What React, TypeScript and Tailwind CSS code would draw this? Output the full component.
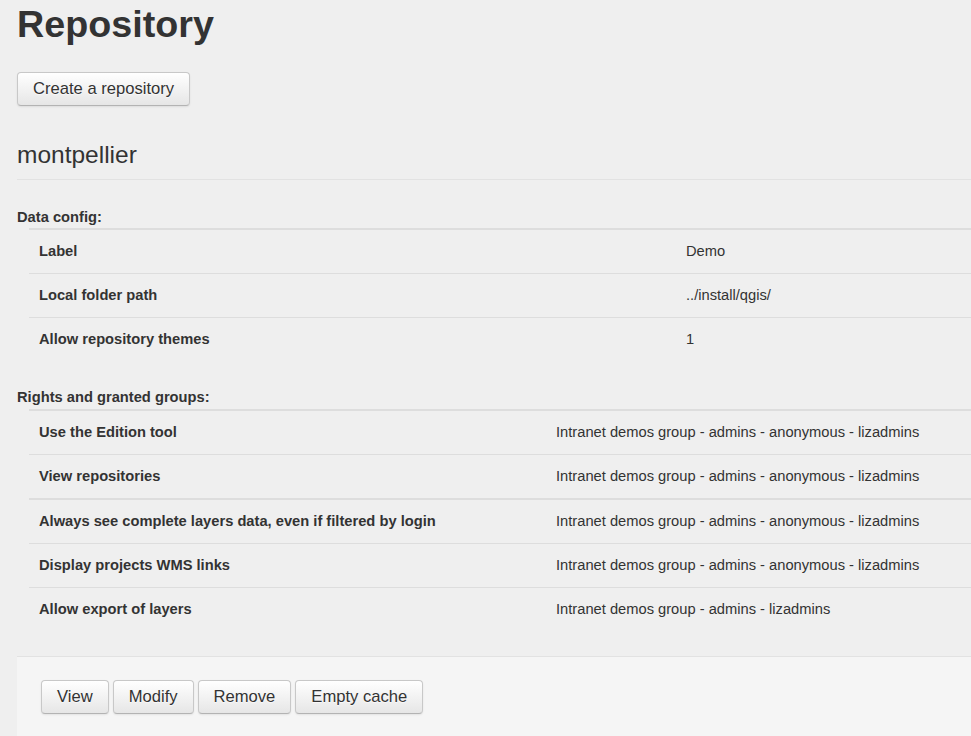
const dataConfig = [
  { label: 'Label', value: 'Demo' },
  { label: 'Local folder path', value: '../install/qgis/' },
  { label: 'Allow repository themes', value: '1' },
];

const rights = [
  { label: 'Use the Edition tool', value: 'Intranet demos group - admins - anonymous - lizadmins' },
  { label: 'View repositories', value: 'Intranet demos group - admins - anonymous - lizadmins' },
  { label: 'Always see complete layers data, even if filtered by login', value: 'Intranet demos group - admins - anonymous - lizadmins', thick: true },
  { label: 'Display projects WMS links', value: 'Intranet demos group - admins - anonymous - lizadmins' },
  { label: 'Allow export of layers', value: 'Intranet demos group - admins - lizadmins' },
];

const btn =
  'inline-block px-[15px] py-[6px] text-[16.6px] leading-[20px] text-[#333] bg-gradient-to-b from-white to-[#e6e6e6] border border-[#c8c8c8] border-b-[#b3b3b3] rounded-[4px] shadow-[0_1px_2px_rgba(0,0,0,0.08)] [text-shadow:0_1px_1px_rgba(255,255,255,0.75)]';

interface Row {
  label: string;
  value: string;
  thick?: boolean;
}

function InfoTable({ rows, labelWidth }: { rows: Row[]; labelWidth: string }) {
  return (
    <div className="ml-[12px] border-t-2 border-[#dddddd]">
      {rows.map((r, i) => (
        <div
          key={r.label}
          className={
            'flex text-[14.7px] leading-[21px] py-[11px] ' +
            (i === 0 ? '' : r.thick ? 'border-t-2 border-[#dddddd] ' : 'border-t border-[#dddddd] ')
          }
        >
          <div className={'pl-[10px] shrink-0 font-bold ' + labelWidth}>{r.label}</div>
          <div className="pl-[10px]">{r.value}</div>
        </div>
      ))}
    </div>
  );
}

export default function App() {
  return (
    <div className="min-h-screen w-full overflow-hidden bg-[#efefef] text-[#333] font-['Liberation_Sans',Arial,sans-serif]">
      <div className="pl-[17px]">
        <h1 className="pt-[4px] text-[37.7px] leading-[40px] font-bold">Repository</h1>
        <div className="mt-[28px]">
          <button className={btn}>Create a repository</button>
        </div>
        <h3 className="mt-[29px] text-[24.5px] leading-[40px] pb-[4px] border-b border-[#e2e2e2]">montpellier</h3>

        <div className="mt-[27px] text-[14.7px] leading-[21px] font-bold">Data config:</div>
        <InfoTable rows={dataConfig} labelWidth="w-[647px]" />

        <div className="mt-[26px] mb-[1px] text-[14.7px] leading-[21px] font-bold">Rights and granted groups:</div>
        <InfoTable rows={rights} labelWidth="w-[517px]" />

        <div className="mt-[25px] bg-[#f5f5f5] border-t border-[#e2e2e2] pt-[23px] pb-[24px] pl-[24px] flex gap-[4px]">
          <button className={btn}>View</button>
          <button className={btn}>Modify</button>
          <button className={btn}>Remove</button>
          <button className={btn}>Empty cache</button>
        </div>
      </div>
    </div>
  );
}
